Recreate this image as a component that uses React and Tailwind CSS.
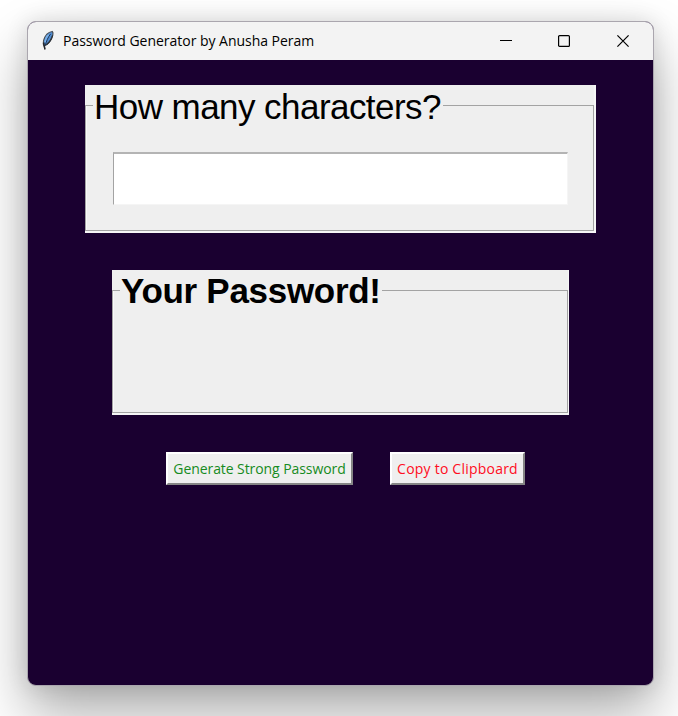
import React from "react";

function FeatherIcon() {
  return (
    <svg width="14" height="22" viewBox="0 0 14 22" className="shrink-0">
      <path d="M11.300 1.500C7.500 2 4 5.500 2.600 10.500c-.6 2.500-.4 4.300.6 5.500C7.500 14 10.500 9.500 11.800 5c.4-1.500.2-2.700-.5-3.500Z" fill="#4f8bd0" stroke="#4b5057" strokeWidth="1.200" />
      <path d="M5.500 5.500C4 8 3.300 10.500 3.200 13l1.500-.5L9 3.500Z" fill="#78b0ea" />
      <path d="M9.500 4C6.800 7.500 5.500 11 4.300 15.500" fill="none" stroke="#1c3557" strokeWidth="1" />
      <path d="M2.800 12.500C2.600 15 3.500 16.500 4 19.500" fill="none" stroke="#25282c" strokeWidth="1.600" />
      <path d="M11.600 5.500C10.500 9.500 8.500 12.500 5.500 14.800" fill="none" stroke="#2b3036" strokeWidth="1.200" />
    </svg>
  );
}

function TitleBar() {
  return (
    <header className="flex h-[38px] items-center bg-[#f3f3f3] pl-[13px]">
      <FeatherIcon />
      <h1 className="ml-2 grow whitespace-nowrap pb-[2px] font-['Open_Sans','Noto_Sans',sans-serif] text-[14px] tracking-[-0.03px] text-black">
        Password Generator by Anusha Peram
      </h1>
      <div className="flex items-center pr-6">
        <svg width="12" height="12" viewBox="0 0 12 12">
          <path d="M0 5.500H12" stroke="#000" />
        </svg>
        <svg width="12" height="12" viewBox="0 0 12 12" className="ml-[46px]">
          <rect x=".6" y=".6" width="10.800" height="10.800" rx="1" fill="none" stroke="#000" strokeWidth="1.200" />
        </svg>
        <svg width="12" height="12" viewBox="0 0 12 12" className="ml-[47px]">
          <path d="M.4.4 11.600 11.600M11.600.4.4 11.600" stroke="#000" strokeWidth="1.200" />
        </svg>
      </div>
    </header>
  );
}

function Panel({ title, className, legendClass, children }) {
  return (
    <section className={`border-[#f6f6f6] bg-[#efefef] ${className}`}>
      <fieldset className="h-full border border-[#a3a3a3] shadow-[inset_1px_0_0_#f9f9f9]">
        <legend className={`ml-[7px] h-10 whitespace-nowrap bg-[#efefef] pl-[1px] font-['Liberation_Sans',Arial,sans-serif] text-[35px] text-black ${legendClass}`}>
          {title}
        </legend>
        {children}
      </fieldset>
    </section>
  );
}

function Button({ className, children }) {
  return (
    <button className={`h-[33px] whitespace-nowrap border-2 border-t-white border-l-white border-r-[#858585] border-b-[#858585] bg-[#efefef] text-center font-['Open_Sans','Noto_Sans',sans-serif] text-[14px] leading-[28px] ${className}`}>
      {children}
    </button>
  );
}

export default function App() {
  return (
    <div className="h-[716px] w-[678px] overflow-hidden bg-white pt-[21px] pl-[27px]">
      <main className="h-[665px] w-[627px] overflow-hidden rounded-[9px] border border-[#aaa6ae] bg-[#1a0030] shadow-[0_28px_56px_rgba(0,0,0,0.32),0_0_22px_rgba(0,0,0,0.12)]">
        <TitleBar />
        <div className="flex flex-col items-start pt-[25px]">
          <Panel title="How many characters?" className="ml-[57px] h-[148px] w-[511px] border-r-2 border-b-2" legendClass="w-[350px] leading-[43px] tracking-[-0.55px]">
            <input
              aria-label="How many characters?"
              className="ml-[27px] mt-[27px] block h-[53px] w-[455px] border-t-2 border-l border-r border-b border-t-[#b4b4b4] border-l-[#a3a3a3] border-r-[#f5f5f5] border-b-[#f5f5f5] bg-white"
            />
          </Panel>
          <Panel title="Your Password!" className="ml-[84px] mt-[37px] h-[145px] w-[457px] border-r border-b-2" legendClass="w-[262px] font-bold leading-[41px] tracking-[-0.3px]" />
          <div className="mt-[37px] ml-[138px] flex gap-[37px]">
            <Button className="w-[187px] tracking-[-0.08px] text-[#168b22]">Generate Strong Password</Button>
            <Button className="w-[135px] tracking-[0.22px] text-[#ff0c22]">Copy to Clipboard</Button>
          </div>
        </div>
      </main>
    </div>
  );
}
